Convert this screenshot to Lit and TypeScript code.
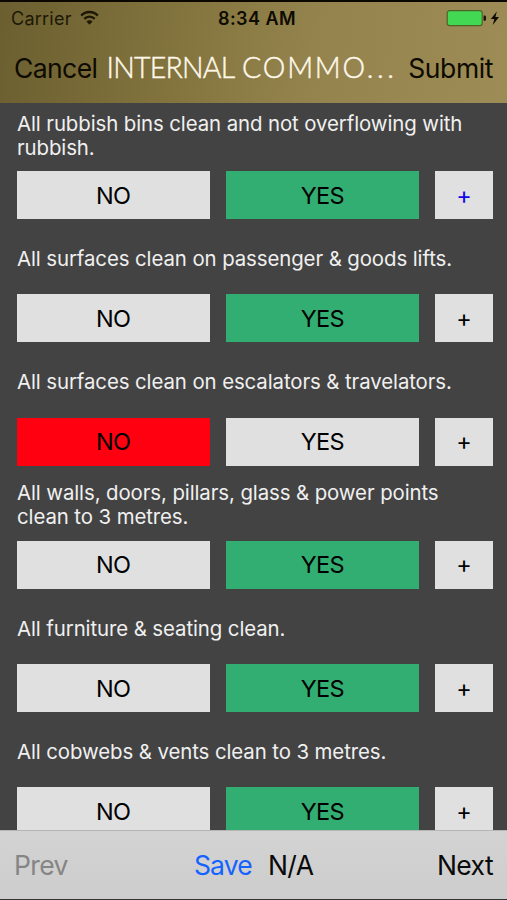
import { LitElement, html, css, svg } from "lit";
import { customElement, property } from "lit/decorators.js";
import { classMap } from "lit/directives/class-map.js";

type Answer = "no" | "yes";

interface Question {
  lines: string[];
  answer: Answer;
  noted?: boolean;
}

const QUESTIONS: Question[] = [
  {
    lines: ["All rubbish bins clean and not overflowing with", "rubbish."],
    answer: "yes",
    noted: true,
  },
  { lines: ["All surfaces clean on passenger & goods lifts."], answer: "yes" },
  { lines: ["All surfaces clean on escalators & travelators."], answer: "no" },
  {
    lines: ["All walls, doors, pillars, glass & power points", "clean to 3 metres."],
    answer: "yes",
  },
  { lines: ["All furniture & seating clean."], answer: "yes" },
  { lines: ["All cobwebs & vents clean to 3 metres."], answer: "yes" },
];

const wifiIcon = svg`
  <path d="M1.2 5.6a11.4 11.4 0 0 1 16.6 0" fill="none" stroke="currentColor" stroke-width="2.3"/>
  <path d="M4.3 8.9a7.2 7.2 0 0 1 10.4 0" fill="none" stroke="currentColor" stroke-width="2.3"/>
  <path d="M6.5 11.6a4.2 4.2 0 0 1 6 0L9.5 14.8z" fill="currentColor"/>`;

@customElement("status-bar")
export class StatusBar extends LitElement {
  static styles = css`
    :host {
      display: grid;
      grid-template-columns: 1fr auto 1fr;
      align-items: center;
      height: 31px;
      padding: 1px 7px 0 11px;
      box-sizing: border-box;
      color: #0d0b02;
    }
    .carrier {
      display: flex;
      align-items: center;
      gap: 8px;
      font-size: 18px;
      letter-spacing: 0.25px;
      color: #1c1805;
    }
    .wifi {
      display: block;
      width: 19px;
      height: 16px;
    }
    .time {
      padding-left: 3px;
      font-size: 18px;
      font-weight: 600;
      letter-spacing: 0.45px;
    }
    .power {
      display: block;
      justify-self: end;
      width: 54px;
      height: 18px;
    }
  `;

  render() {
    return html`
      <div class="carrier">
        <span>Carrier</span>
        <svg class="wifi" viewBox="0 0 19 16">${wifiIcon}</svg>
      </div>
      <div class="time">8:34 AM</div>
      <svg class="power" viewBox="0 0 54 18">
        <rect x="1.2" y="1.6" width="35" height="15" rx="2.4" fill="#43d853" stroke="#4e6425" stroke-width="1.2" />
        <path d="M37.6 6.6h1q1.4 0 1.4 1.4v2.4q0 1.4-1.4 1.4h-1z" fill="#171303" />
        <path d="M50.8 2.6 44.8 9.9h3.5l-1.5 6 6.2-8h-3.6z" fill="#0d0b02" />
      </svg>
    `;
  }
}

@customElement("check-item")
export class CheckItem extends LitElement {
  @property({ attribute: false }) question!: Question;

  static styles = css`
    :host {
      display: block;
      height: 123.3px;
    }
    .label {
      display: flex;
      flex-direction: column;
      justify-content: center;
      height: 72px;
      padding: 1px 0 0 0.4px;
      box-sizing: border-box;
      color: #f0f0f0;
      font-size: 20.4px;
      line-height: 24px;
      letter-spacing: -0.09px;
      white-space: nowrap;
    }
    .buttons {
      display: grid;
      grid-template-columns: 193.2px 193.2px 57.6px;
      column-gap: 16px;
      height: 48px;
    }
    .button {
      display: flex;
      align-items: center;
      justify-content: center;
      background: #e0e0e0;
      color: #000;
      font-size: 23.5px;
      letter-spacing: -0.7px;
    }
    .green {
      background: #32ae72;
    }
    .red {
      background: #ff0010;
    }
    .noted {
      color: #1405e8;
    }
  `;

  render() {
    const { lines, answer, noted } = this.question;
    return html`
      <div class="label">${lines.map((line) => html`<span>${line}</span>`)}</div>
      <div class="buttons">
        <div class=${classMap({ button: true, red: answer === "no" })}>NO</div>
        <div class=${classMap({ button: true, green: answer === "yes" })}>YES</div>
        <div class=${classMap({ button: true, noted: !!noted })}>+</div>
      </div>
    `;
  }
}

@customElement("app-root")
export class AppRoot extends LitElement {
  static styles = css`
    :host {
      display: flex;
      flex-direction: column;
      height: 900px;
      overflow: hidden;
      box-sizing: border-box;
      border-top: 2px solid #0a0800;
      border-bottom: 1px solid #333;
      background: #434343;
      font-family: Inter, "Liberation Sans", sans-serif;
    }
    .header {
      flex: none;
      height: 100.5px;
      background: linear-gradient(97deg, #6b5f30 0%, #85763f 38%, #94834d 62%, #9d8c55 100%);
    }
    .nav {
      display: flex;
      align-items: center;
      height: 70px;
      padding: 0 14px;
      box-sizing: border-box;
      white-space: nowrap;
      font-size: 26.5px;
      color: #0d0a00;
    }
    .cancel {
      width: 92.5px;
      letter-spacing: -0.6px;
    }
    .title {
      flex: 1;
      margin-top: -2px;
      font-family: Lato, sans-serif;
      font-weight: 300;
      font-size: 28.5px;
      letter-spacing: -0.75px;
      -webkit-text-stroke: 0.45px #fff8ea;
      color: #fff8ea;
    }
    .wide {
      margin-left: 1.5px;
      letter-spacing: 1.8px;
    }
    .dots {
      letter-spacing: 3.6px;
    }
    .submit {
      letter-spacing: -0.4px;
    }
    .list {
      flex: 1;
      min-height: 0;
      overflow: hidden;
      padding: 0 14px 0 16.6px;
    }
    .items {
      margin-top: -3.5px;
    }
    .toolbar {
      flex: none;
      display: flex;
      align-items: center;
      height: 69.5px;
      padding: 0 14px;
      box-sizing: border-box;
      border-top: 1px solid #b5b5b5;
      background: linear-gradient(#d2d3d2, #cdcdcd);
      font-size: 26.5px;
      letter-spacing: -0.6px;
      white-space: nowrap;
      color: #0a0a0a;
    }
    .prev {
      width: 180px;
      color: #858585;
    }
    .save {
      width: 74px;
      letter-spacing: -0.9px;
      color: #1463ff;
    }
    .next {
      margin-left: auto;
    }
  `;

  render() {
    return html`
      <div class="header">
        <status-bar></status-bar>
        <div class="nav">
          <span class="cancel">Cancel</span>
          <span class="title">INTERNAL <span class="wide">COMMO</span><span class="dots">...</span></span>
          <span class="submit">Submit</span>
        </div>
      </div>
      <div class="list">
        <div class="items">
          ${QUESTIONS.map((q) => html`<check-item .question=${q}></check-item>`)}
        </div>
      </div>
      <div class="toolbar">
        <span class="prev">Prev</span>
        <span class="save">Save</span>
        <span>N/A</span>
        <span class="next">Next</span>
      </div>
    `;
  }
}
